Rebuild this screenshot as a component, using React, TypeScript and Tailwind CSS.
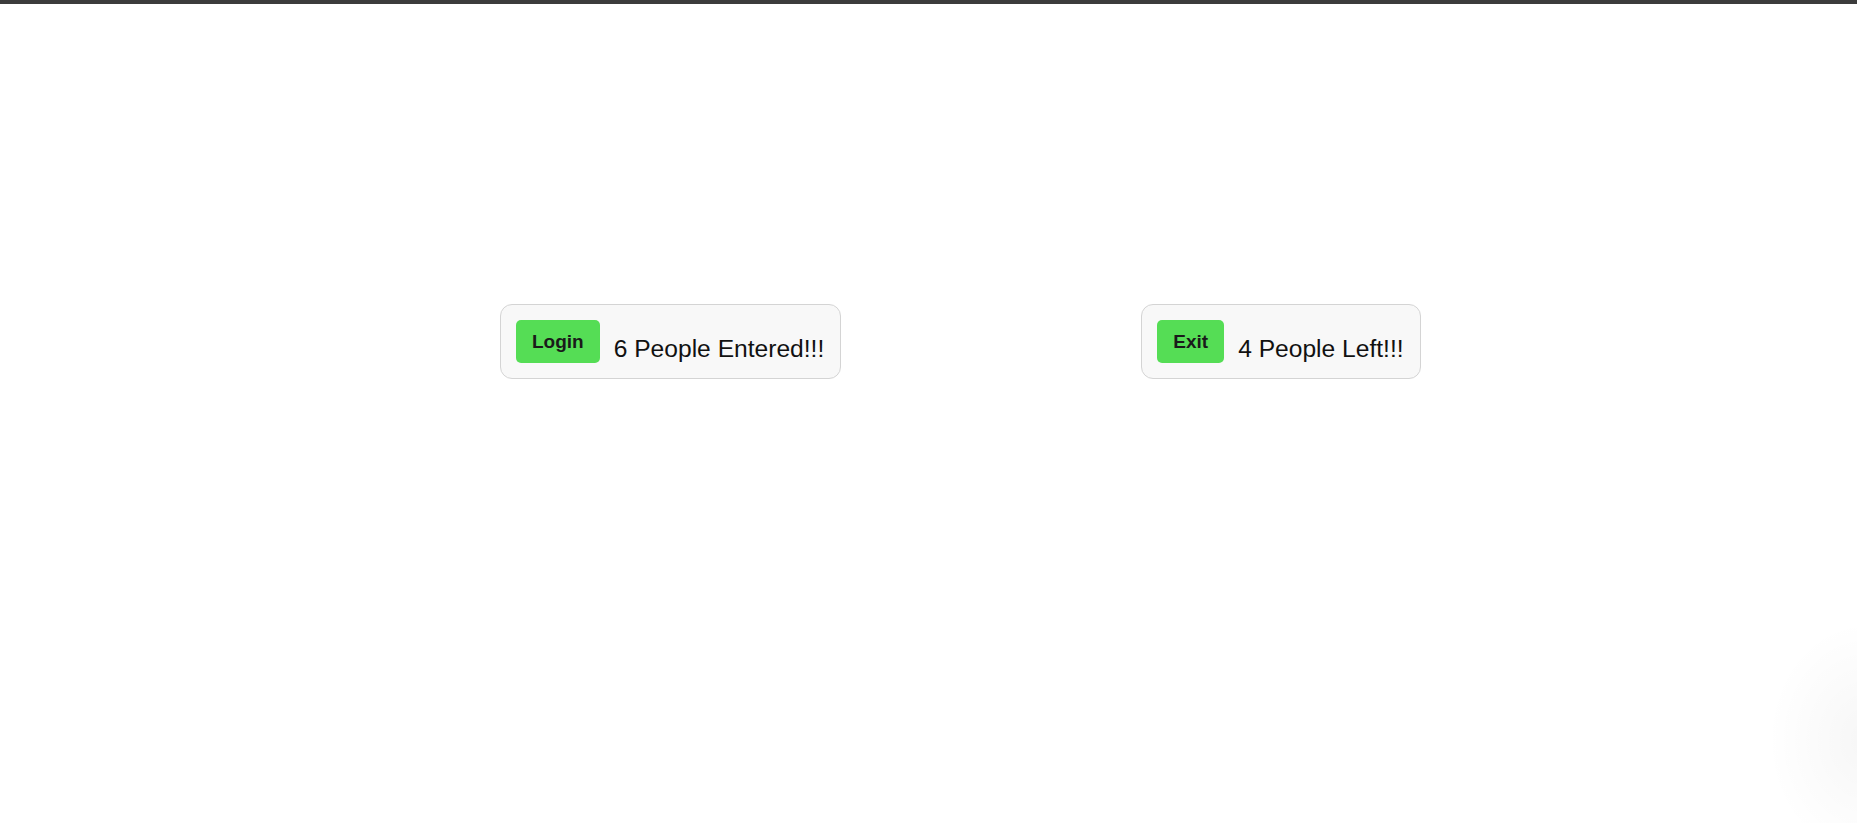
const counters = [
  { label: 'Login', text: '6 People Entered!!!' },
  { label: 'Exit', text: '4 People Left!!!' },
];

const Counter = ({ label, text }: { label: string; text: string }) => {
  return (
    <div className="flex items-start rounded-[12px] border border-[#d4d4d4] bg-[#f8f8f8] pl-[15px] pr-[16px] pt-[15px] pb-[15px]">
      <button className="h-[43px] rounded-[5px] bg-[#55dd55] px-[16px] text-[19px] font-bold leading-none text-[#1a1a1a]">
        {label}
      </button>
      <span className="ml-[14px] mt-[17px] text-[24.6px] leading-none text-[#111]">{text}</span>
    </div>
  );
};

export default function App() {
  return (
    <main
      className="relative min-h-[823px] overflow-hidden bg-white"
      style={{ fontFamily: '"Liberation Sans", Arial, sans-serif' }}
    >
      <div className="h-[4px] bg-[#3c3c3c]" />
      <div className="flex gap-[300px] pl-[500px] pt-[300px]">
        {counters.map(c => (
          <Counter key={c.label} label={c.label} text={c.text} />
        ))}
      </div>
      {/* faint glow in the lower right corner */}
      <div className="pointer-events-none absolute right-[-110px] top-[620px] h-[240px] w-[200px] rounded-full bg-[radial-gradient(closest-side,rgba(0,0,0,0.035)_0%,rgba(0,0,0,0.015)_55%,rgba(0,0,0,0)_100%)]" />
    </main>
  );
}
